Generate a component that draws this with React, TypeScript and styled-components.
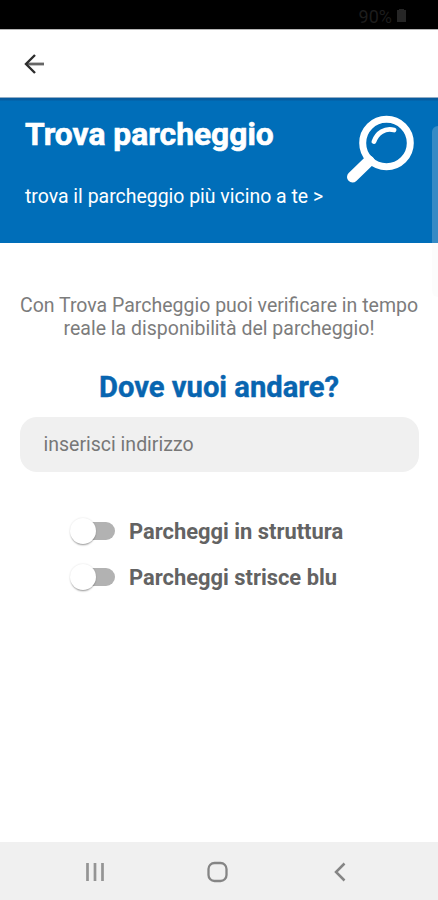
import React from "react";
import styled, { createGlobalStyle } from "styled-components";

const GlobalStyle = createGlobalStyle`
  * { box-sizing: border-box; }
  body { margin: 0; background: #fff; font-family: Roboto, sans-serif; }
`;

const Screen = styled.div`
  position: relative;
  display: flex;
  flex-direction: column;
  width: 438px;
  height: 900px;
  overflow: hidden;
  background: #fff;
`;

const StatusBar = styled.div`
  display: flex;
  justify-content: flex-end;
  align-items: center;
  gap: 4px;
  height: 30px;
  padding: 3px 31px 0 0;
  border-bottom: 1px solid #b5b5b5;
  background: #000;
  color: #1d1d1d;
  font-size: 18px;
`;

const TopBar = styled.header`
  display: flex;
  align-items: center;
  height: 67px;
  padding-left: 24px;
`;

const Banner = styled.section`
  display: flex;
  justify-content: space-between;
  height: 146px;
  padding: 16px 23px 0 25px;
  border-top: 1px solid #91adc6;
  background: linear-gradient(#075c9f 0 2px, #006eb9 3px);
  color: #fff;
`;

const Heading = styled.h1`
  margin: 0;
  font-size: 31.8px;
  line-height: 40px;
  font-weight: 700;
  white-space: nowrap;
  -webkit-text-stroke: 0.6px currentColor;
`;

const BannerLink = styled.p`
  margin: 31px 0 0;
  font-size: 19.45px;
  line-height: 24px;
  white-space: nowrap;
`;

const Main = styled.main`
  display: flex;
  flex: 1;
  flex-direction: column;
  align-items: center;
  padding-top: 51px;
`;

const Intro = styled.p`
  margin: 0;
  color: #7c7c7c;
  font-size: 19.5px;
  line-height: 23px;
  text-align: center;
  white-space: nowrap;
`;

const Question = styled.h2`
  margin: 30px 0 0;
  color: #0865b0;
  font-size: 29.2px;
  line-height: 34px;
  font-weight: 700;
  -webkit-text-stroke: 0.4px currentColor;
`;

const AddressInput = styled.input`
  width: 399px;
  height: 55px;
  margin-top: 13px;
  padding: 0 24px;
  border: 0;
  border-radius: 17px;
  background: #f0f0f0;
  font: 19.5px Roboto, sans-serif;
  &::placeholder { color: #777; }
`;

const Options = styled.div`
  display: flex;
  flex-direction: column;
  align-self: stretch;
  margin-top: 36px;
  padding-left: 70px;
`;

const Option = styled.label`
  display: flex;
  align-items: center;
  gap: 14px;
  height: 46px;
  color: #636363;
  font-size: 21.9px;
  font-weight: 700;
`;

const Track = styled.span`
  display: flex;
  align-items: center;
  width: 45px;
  height: 26px;
  &::after {
    content: "";
    width: 31px;
    height: 18px;
    margin-left: -12px;
    border-radius: 0 9px 9px 0;
    background: #b2b2b2;
  }
`;

const Thumb = styled.span`
  z-index: 1;
  width: 26px;
  height: 26px;
  border-radius: 50%;
  background: #fff;
  box-shadow: 0 2px 2px -1px #0006, 0 0 2px #0002;
`;

const NavBar = styled.nav`
  display: flex;
  align-items: center;
  justify-content: space-between;
  height: 58px;
  padding: 2px 88px 0 85px;
  background: #f0f0f0;
`;

const EdgeHandle = styled.div`
  position: absolute;
  top: 126px;
  right: 0;
  width: 6px;
  height: 171px;
  border-radius: 6px 0 0 6px;
  background: #f0f0f038;
`;

function Toggle({ label }: { label: string }) {
  return <Option><Track><Thumb /></Track><span>{label}</span></Option>;
}

export default function App() {
  return (
    <Screen>
      <GlobalStyle />
      <StatusBar>
        <span>90%</span>
        <svg width="11" height="14" viewBox="0 0 11 14"><path d="M3 0h5v1h2v12H1V1h2z" fill="#262626" /></svg>
      </StatusBar>
      <TopBar>
        <svg width="22" height="22" viewBox="0 0 22 22" fill="none">
          <path d="M20 11H3" stroke="#666" strokeWidth="2.8" />
          <path d="M11 2l-9 9 9 9" stroke="#2d2d2d" strokeWidth="2.4" />
        </svg>
      </TopBar>
      <Banner>
        <div><Heading>Trova parcheggio</Heading><BannerLink>trova il parcheggio più vicino a te &gt;</BannerLink></div>
        <svg width="70" height="70" viewBox="0 0 70 70" fill="none" stroke="#fff" strokeLinecap="round">
          <circle cx="41.5" cy="29" r="23.8" strokeWidth="7" />
          <path d="M29 27.5C32 19 40 13.5 49 16" strokeWidth="4.8" />
          <path d="M24 47L7.5 63" strokeWidth="11" />
        </svg>
      </Banner>
      <Main>
        <Intro>Con Trova Parcheggio puoi verificare in tempo<br />reale la disponibilità del parcheggio!</Intro>
        <Question>Dove vuoi andare?</Question>
        <AddressInput placeholder="inserisci indirizzo" />
        <Options><Toggle label="Parcheggi in struttura" /><Toggle label="Parcheggi strisce blu" /></Options>
      </Main>
      <NavBar>
        <svg width="20" height="20" viewBox="0 0 20 20" stroke="#949494" strokeWidth="2.7"><path d="M2.5 1v18M10 1v18M17.5 1v18" /></svg>
        <svg width="22" height="22" viewBox="0 0 22 22" fill="none" stroke="#858585" strokeWidth="2.3"><rect x="1.5" y="2" width="18" height="18" rx="6" /></svg>
        <svg width="20" height="20" viewBox="0 0 20 20" fill="none" stroke="#858585" strokeWidth="2.5"><path d="M14.5 1.5L6 10l8.5 8.5" /></svg>
      </NavBar>
      <EdgeHandle />
    </Screen>
  );
}
